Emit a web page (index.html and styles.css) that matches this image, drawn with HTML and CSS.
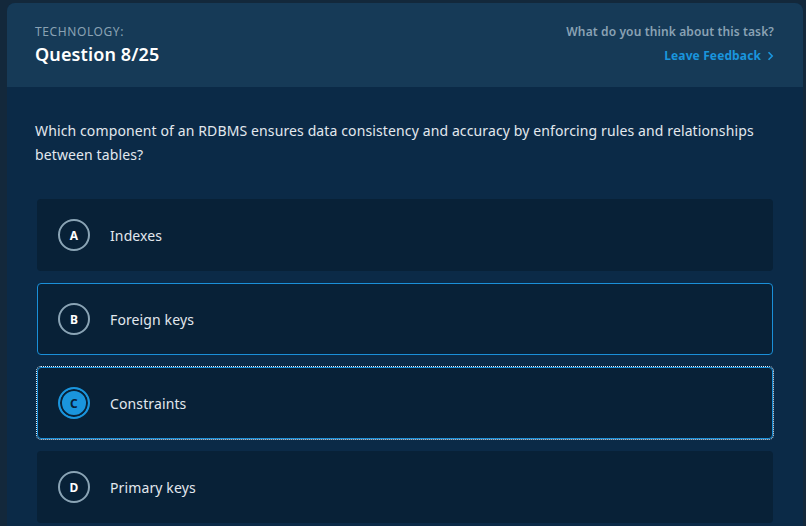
FILE: index.html
```html
<!DOCTYPE html>
<html lang="en">
<head>
<meta charset="utf-8">
<title>Question 8/25</title>
<link rel="stylesheet" href="styles.css">
</head>
<body>
<div class="card">
  <header class="head">
    <div class="head-left">
      <div class="category">TECHNOLOGY:</div>
      <div class="qnum">Question 8/25</div>
    </div>
    <div class="head-right">
      <div class="ask">What do you think about this task?</div>
      <a class="feedback" href="#">Leave Feedback
        <svg class="chev" width="7" height="10" viewBox="0 0 7 10"><path d="M1.5 1.2 L5.2 5 L1.5 8.8" fill="none" stroke="currentColor" stroke-width="1.6"/></svg>
      </a>
    </div>
  </header>
  <main class="body">
    <p class="question">Which component of an RDBMS ensures data consistency and accuracy by enforcing rules and relationships between tables?</p>
    <div class="options">
      <div class="option"><span class="letter">A</span><span class="label">Indexes</span></div>
      <div class="option hover"><span class="letter">B</span><span class="label">Foreign keys</span></div>
      <div class="option selected"><span class="letter">C</span><span class="label">Constraints</span></div>
      <div class="option"><span class="letter">D</span><span class="label">Primary keys</span></div>
    </div>
  </main>
</div>
</body>
</html>
```
FILE: styles.css
```css
html, body {
  margin: 0;
  padding: 0;
  height: 100%;
  overflow: hidden;
}
body {
  background: #13283b;
  font-family: "Noto Sans", "Open Sans", sans-serif;
  letter-spacing: 0.12px;
  padding: 3px 3px 0 7px;
  box-sizing: border-box;
}
.card {
  width: 796px;
  height: 100%;
  background: #0b2a47;
  border-radius: 8px 8px 0 0;
  overflow: hidden;
}
.head {
  background: #163a57;
  height: 84px;
  box-sizing: border-box;
  padding: 21px 29px 0 28px;
  display: flex;
  justify-content: space-between;
}
.category {
  font-size: 12px;
  line-height: 16px;
  color: #8aa2b4;
  letter-spacing: 0.6px;
}
.qnum {
  margin-top: 2px;
  font-size: 18px;
  line-height: 24px;
  font-weight: 600;
  color: #ffffff;
}
.head-right {
  display: flex;
  flex-direction: column;
  align-items: flex-end;
}
.ask {
  font-size: 12px;
  line-height: 16px;
  color: #8aa2b4;
  font-weight: 600;
}
.feedback {
  margin-top: 8px;
  font-size: 12px;
  line-height: 16px;
  font-weight: 700;
  color: #1a95dd;
  text-decoration: none;
  display: flex;
  align-items: center;
  gap: 6px;
}
.chev {
  display: block;
}
.body {
  padding: 32px 28px 0 28px;
}
.question {
  margin: 0;
  font-size: 14px;
  line-height: 24px;
  color: #e2e8ee;
}
.options {
  margin-top: 32px;
  padding: 0 2px;
  display: flex;
  flex-direction: column;
  gap: 12px;
}
.option {
  height: 72px;
  box-sizing: border-box;
  background: #082137;
  border-radius: 4px;
  border: 1px solid transparent;
  display: flex;
  align-items: center;
  padding-left: 20px;
}
.option.hover {
  border-color: #1a8fd8;
}
.option.selected {
  border-color: #1a8fd8;
  outline: 1px dotted #e8f2fa;
  outline-offset: 0;
}
.letter {
  width: 32px;
  height: 32px;
  box-sizing: border-box;
  border: 2px solid #8aa4b5;
  border-radius: 50%;
  display: flex;
  align-items: center;
  justify-content: center;
  font-size: 12px;
  font-weight: 700;
  color: #ffffff;
}
.selected .letter {
  border-color: #1a95dd;
  background: #1a95dd;
  box-shadow: inset 0 0 0 2px #082137;
  color: #082137;
}
.label {
  margin-left: 20px;
  font-size: 14px;
  color: #e2e8ee;
}
```
